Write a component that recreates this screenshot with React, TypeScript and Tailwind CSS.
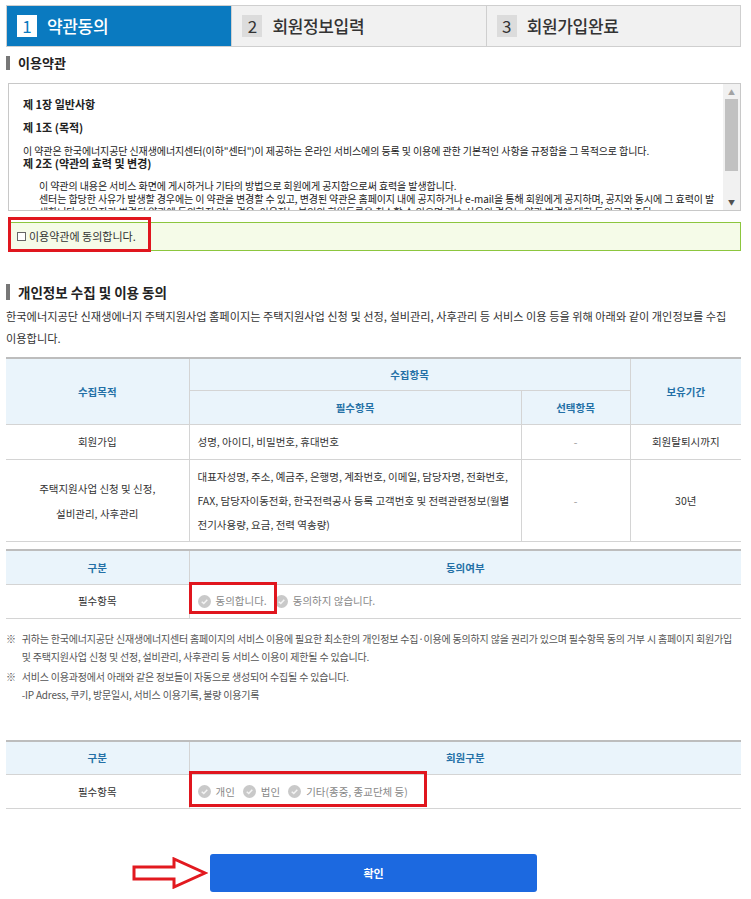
import React from 'react';

const kr = { fontFamily: '"Noto Sans CJK KR", "Noto Sans", sans-serif' };

function Steps() {
  const steps = [
    { n: 1, label: '약관동의', active: true, w: 'w-[225px]' },
    { n: 2, label: '회원정보입력', active: false, w: 'w-[255px]' },
    { n: 3, label: '회원가입완료', active: false, w: 'w-[255px]' },
  ];
  return (
    <div className="flex h-[42px] border border-[#cfcfcf]">
      {steps.map((s, i) => (
        <div
          key={s.n}
          className={`${s.w} flex items-center gap-[10px] pl-[10px] ${
            s.active ? 'bg-[#0a7ac0] text-white' : 'bg-[#f1f1f1] text-[#333]'
          } ${i > 0 ? 'border-l border-[#cfcfcf]' : ''}`}
        >
          <span
            className={`flex h-[22px] w-[20px] items-center justify-center text-[17px] ${
              s.active ? 'bg-white text-[#0a7ac0]' : 'bg-[#dcdcdc] text-[#333]'
            }`}
          >
            {s.n}
          </span>
          <span className="text-[17px] font-medium tracking-[-0.02em]">{s.label}</span>
        </div>
      ))}
    </div>
  );
}

function Heading({ children, big }: { children: React.ReactNode; big?: boolean }) {
  return (
    <div className="flex items-center gap-[8px]">
      <span className={`w-[4px] bg-[#777] ${big ? 'h-[16px]' : 'h-[14px]'}`} />
      <span className={`font-bold text-[#222] ${big ? 'text-[13.5px]' : 'text-[13px]'}`}>{children}</span>
    </div>
  );
}

function CheckIcon() {
  return (
    <svg width="13" height="13" viewBox="0 0 14 14" className="shrink-0">
      <circle cx="7" cy="7" r="7" fill="#c9c9c9" />
      <path d="M4 7.2 L6.2 9.2 L10 5" fill="none" stroke="#f4f4f4" strokeWidth="1.6" />
    </svg>
  );
}

function Radio({ label }: { label: string }) {
  return (
    <span className="flex items-center gap-[5px] text-[#888]">
      <CheckIcon />
      {label}
    </span>
  );
}

function Terms() {
  return (
    <div className="flex h-[128px] border border-[#c8c8c8] bg-white">
      <div className="flex-1 overflow-hidden pl-[14px] pr-[6px] pt-[14px] text-[10px] leading-[13px] text-[#222]">
        <p className="mb-[10px] text-[11px] font-bold">제 1장 일반사항</p>
        <p className="mb-[10px] text-[11px] font-bold">제 1조 (목적)</p>
        <p className="tracking-[-0.01em]">
          이 약관은 한국에너지공단 신재생에너지센터(이하"센터")이 제공하는 온라인 서비스에의 등록 및 이용에 관한 기본적인 사항을 규정함을 그 목적으로 합니다.
        </p>
        <p className="mb-[9px] text-[11px] font-bold">제 2조 (약관의 효력 및 변경)</p>
        <div className="pl-[16px] tracking-[-0.01em]">
          <p>이 약관의 내용은 서비스 화면에 게시하거나 기타의 방법으로 회원에게 공지함으로써 효력을 발생합니다.</p>
          <p className="whitespace-nowrap">센터는 합당한 사유가 발생할 경우에는 이 약관을 변경할 수 있고, 변경된 약관은 홈페이지 내에 공지하거나 e-mail을 통해 회원에게 공지하며, 공지와 동시에 그 효력이 발</p>
          <p className="whitespace-nowrap">생합니다. 이용자가 변경된 약관에 동의하지 않는 경우, 이용자는 본인의 회원등록을 취소할 수 있으며 계속 사용의 경우는 약관 변경에 대한 동의로 간주됩</p>
        </div>
      </div>
      <div className="flex w-[17px] flex-col items-center bg-[#f1f1f1] py-[3px]">
        <span className="text-[7px] leading-[10px] text-[#a3a3a3]">▲</span>
        <div className="mt-[2px] h-[72px] w-[13px] bg-[#c1c1c1]" />
        <div className="flex-1" />
        <span className="text-[7px] leading-[10px] text-[#505050]">▼</span>
      </div>
    </div>
  );
}

const th = 'border border-[#d4d4d4] bg-[#eaf4fb] text-[#2470a6] font-bold text-[10.5px]';
const td = 'border border-[#d4d4d4] text-[10.5px] text-[#333]';

function CollectTable() {
  return (
    <table className="w-full border-collapse border-t-2 border-t-[#bdbdbd]" style={{ tableLayout: 'fixed' }}>
      <colgroup>
        <col className="w-[183px]" />
        <col className="w-[332px]" />
        <col className="w-[109px]" />
        <col />
      </colgroup>
      <tbody>
        <tr className="h-[33px]">
          <th rowSpan={2} className={`${th} border-l-0`}>수집목적</th>
          <th colSpan={2} className={th}>수집항목</th>
          <th rowSpan={2} className={`${th} border-r-0`}>보유기간</th>
        </tr>
        <tr className="h-[34px]">
          <th className={th}>필수항목</th>
          <th className={th}>선택항목</th>
        </tr>
        <tr className="h-[35px]">
          <td className={`${td} border-l-0 text-center`}>회원가입</td>
          <td className={`${td} px-[8px]`}>성명, 아이디, 비밀번호, 휴대번호</td>
          <td className={`${td} text-center text-[#999]`}>-</td>
          <td className={`${td} border-r-0 text-center`}>회원탈퇴시까지</td>
        </tr>
        <tr className="h-[82px]">
          <td className={`${td} border-l-0 text-center leading-[25px]`}>
            주택지원사업 신청 및 신정,
            <br />
            설비관리, 사후관리
          </td>
          <td className={`${td} px-[8px] py-[2px] leading-[24px]`}>
            대표자성명, 주소, 예금주, 은행명, 계좌번호, 이메일, 담당자명, 전화번호, FAX, 담당자이동전화, 한국전력공사 등록 고객번호 및 전력관련정보(월별 전기사용량, 요금, 전력 역송량)
          </td>
          <td className={`${td} text-center text-[#999]`}>-</td>
          <td className={`${td} border-r-0 text-center`}>30년</td>
        </tr>
      </tbody>
    </table>
  );
}

function ChoiceTable({ head, children }: { head: string; children: React.ReactNode }) {
  return (
    <table className="w-full border-collapse border-t-2 border-t-[#bdbdbd]" style={{ tableLayout: 'fixed' }}>
      <colgroup>
        <col className="w-[183px]" />
        <col />
      </colgroup>
      <tbody>
        <tr className="h-[34px]">
          <th className={`${th} border-l-0`}>구분</th>
          <th className={`${th} border-r-0`}>{head}</th>
        </tr>
        <tr className="h-[34px]">
          <td className={`${td} border-l-0 text-center`}>필수항목</td>
          <td className={`${td} border-r-0 px-[8px]`}>{children}</td>
        </tr>
      </tbody>
    </table>
  );
}

function Arrow() {
  return (
    <svg width="76" height="32" viewBox="0 0 76 32" className="shrink-0">
      <path
        d="M2 10 H42 V2 L73 16 L42 30 V22 H2 Z"
        fill="none"
        stroke="#e2191f"
        strokeWidth="3"
        strokeLinejoin="miter"
      />
    </svg>
  );
}

export default function App() {
  return (
    <div className="min-h-[899px] w-[751px] bg-white px-[6px] pt-[5px] pr-[10px]" style={kr}>
      <Steps />

      <div className="mt-[6px]">
        <Heading>이용약관</Heading>
      </div>

      <div className="mt-[10px] ml-[2px]">
        <Terms />
      </div>

      <div className="relative ml-[2px] mt-[11px] flex h-[29px] items-center border border-[#8cc63e] bg-[#f5fbe8] pl-[8px]">
        <label className="flex items-center gap-[3px] text-[11px] text-[#333]">
          <span className="h-[9px] w-[9px] border border-[#666] bg-white" />
          이용약관에 동의합니다.
        </label>
        <span className="pointer-events-none absolute left-[-1px] top-[-6px] h-[35px] w-[143px] border-[3px] border-[#e0161e]" />
      </div>

      <div className="mt-[31px]">
        <Heading big>개인정보 수집 및 이용 동의</Heading>
      </div>

      <p className="mt-[3px] break-keep text-[11.2px] leading-[22px] text-[#333]">
        한국에너지공단 신재생에너지 주택지원사업 홈페이지는 주택지원사업 신청 및 선정, 설비관리, 사후관리 등 서비스 이용 등을 위해 아래와 같이 개인정보를 수집 이용합니다.
      </p>

      <div className="mt-[8px]">
        <CollectTable />
      </div>

      <div className="mt-[7px]">
        <ChoiceTable head="동의여부">
          <div className="relative flex items-center gap-[8px]">
            <Radio label="동의합니다." />
            <Radio label="동의하지 않습니다." />
            <span className="pointer-events-none absolute left-[-9px] top-[-11px] h-[32px] w-[88px] border-[3px] border-[#e0161e]" />
          </div>
        </ChoiceTable>
      </div>

      <div className="mt-[11px] space-y-[2px] text-[10px] leading-[18px] tracking-[-0.02em] text-[#555]">
        <div className="flex gap-[6px]">
          <span>※</span>
          <p>
            귀하는 한국에너지공단 신재생에너지센터 홈페이지의 서비스 이용에 필요한 최소한의 개인정보 수집·이용에 동의하지 않을 권리가 있으며 필수항목 동의 거부 시 홈페이지 회원가입 및 주택지원사업 신청 및 선정, 설비관리, 사후관리 등 서비스 이용이 제한될 수 있습니다.
          </p>
        </div>
        <div className="flex gap-[6px]">
          <span>※</span>
          <p>
            서비스 이용과정에서 아래와 같은 정보들이 자동으로 생성되어 수집될 수 있습니다.
            <br />
            -IP Adress, 쿠키, 방문일시, 서비스 이용기록, 불량 이용기록
          </p>
        </div>
      </div>

      <div className="mt-[36px]">
        <ChoiceTable head="회원구분">
          <div className="relative flex items-center gap-[8px]">
            <Radio label="개인" />
            <Radio label="법인" />
            <Radio label="기타(종중, 종교단체 등)" />
            <span className="pointer-events-none absolute left-[-9px] top-[-13px] h-[36px] w-[238px] border-[3px] border-[#e0161e]" />
          </div>
        </ChoiceTable>
      </div>

      <div className="mt-[45px] flex items-center pl-[126px]">
        <Arrow />
        <button className="ml-[2px] h-[38px] w-[327px] rounded-[3px] bg-[#1c69e0] text-[11px] font-bold text-white">
          확인
        </button>
      </div>
    </div>
  );
}
